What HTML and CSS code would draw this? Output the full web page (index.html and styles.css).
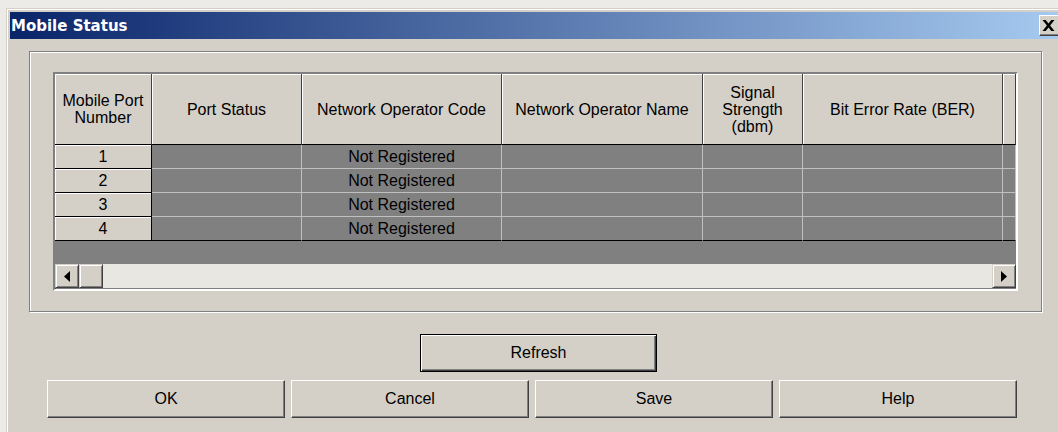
FILE: index.html
```html
<!DOCTYPE html>
<html lang="en">
<head>
<meta charset="utf-8">
<title>Mobile Status</title>
<link rel="stylesheet" href="styles.css">
</head>
<body>
<div class="window">
  <div class="titlebar">
    <span class="title">Mobile Status</span>
    <button class="close" aria-label="Close">
      <svg width="13" height="11" viewBox="0 0 13 11"><path d="M0.5 0h3.2l2.8 3.6L9.3 0h3.2L8.1 5.5 12.5 11H9.3L6.5 7.4 3.7 11H0.5l4.4-5.5z" fill="#000"/></svg>
    </button>
  </div>
  <div class="body">
    <div class="group">
      <div class="grid">
        <table class="table">
          <colgroup>
            <col class="c-port"><col class="c-status"><col class="c-code"><col class="c-name"><col class="c-signal"><col class="c-ber"><col class="c-more">
          </colgroup>
          <thead>
            <tr>
              <th>Mobile Port<br>Number</th>
              <th>Port Status</th>
              <th>Network Operator Code</th>
              <th>Network Operator Name</th>
              <th>Signal<br>Strength<br>(dbm)</th>
              <th>Bit Error Rate (BER)</th>
              <th></th>
            </tr>
          </thead>
          <tbody>
            <tr><td class="rowhead">1</td><td></td><td>Not Registered</td><td></td><td></td><td></td><td></td></tr>
            <tr><td class="rowhead">2</td><td></td><td>Not Registered</td><td></td><td></td><td></td><td></td></tr>
            <tr><td class="rowhead">3</td><td></td><td>Not Registered</td><td></td><td></td><td></td><td></td></tr>
            <tr class="last"><td class="rowhead">4</td><td></td><td>Not Registered</td><td></td><td></td><td></td><td></td></tr>
          </tbody>
        </table>
        <div class="empty"></div>
        <div class="hscroll">
          <div class="sbtn">
            <svg width="6" height="11" viewBox="0 0 6 11"><path d="M6 0v11L0 5.5z" fill="#000"/></svg>
          </div>
          <div class="thumb"></div>
          <div class="track"></div>
          <div class="sbtn">
            <svg width="6" height="11" viewBox="0 0 6 11"><path d="M0 0v11l6-5.5z" fill="#000"/></svg>
          </div>
        </div>
      </div>
    </div>
    <div class="refresh-row">
      <button class="btn default">Refresh</button>
    </div>
    <div class="actions">
      <button class="btn">OK</button>
      <button class="btn">Cancel</button>
      <button class="btn">Save</button>
      <button class="btn">Help</button>
    </div>
  </div>
</div>
</body>
</html>
```

FILE: styles.css
```css
html, body {
  margin: 0;
  padding: 0;
}

body {
  width: 1058px;
  height: 432px;
  overflow: hidden;
  background: #ecebe7;
  font-family: "Liberation Sans", Arial, sans-serif;
  font-size: 16px;
  color: #000;
}

/* dialog frame */
.window {
  box-sizing: border-box;
  margin: 8px 0 0 6px;
  width: 1061px;
  height: 440px;
  background: #d4d0c8;
  border: 1px solid #d4d0c8;
  padding: 3px;
  box-shadow: inset 1px 1px 0 #fff;
}

.titlebar {
  display: flex;
  align-items: center;
  justify-content: space-between;
  height: 27px;
  background: linear-gradient(to right, #0a246a, #a6caf0);
}

.title {
  padding-left: 1px;
  font-family: "DejaVu Sans", Tahoma, sans-serif;
  font-weight: bold;
  font-size: 15px;
  color: #fff;
}

.close {
  box-sizing: border-box;
  display: flex;
  align-items: center;
  justify-content: flex-start;
  width: 22px;
  height: 21px;
  margin-right: 2px;
  padding: 0 0 0 2px;
  background: #d4d0c8;
  border: 1px solid;
  border-color: #fff #404040 #404040 #fff;
  box-shadow: inset -1px -1px 0 #808080;
}

.body {
  padding: 12px 0 0 19px;
}

/* etched group frame */
.group {
  box-sizing: border-box;
  width: 1013px;
  height: 261px;
  border: 1px solid #808080;
  box-shadow: inset 1px 1px 0 #fff, 1px 1px 0 #fff;
  padding: 20px 0 0 23px;
}

/* sunken grid control */
.grid {
  box-sizing: border-box;
  width: 965px;
  height: 219px;
  border: 2px solid;
  border-color: #808080 #fff #fff #808080;
  box-shadow: inset 1px 1px 0 #404040;
  background: #808080;
  overflow: hidden;
}

.table {
  table-layout: fixed;
  border-collapse: separate;
  border-spacing: 0;
  width: 961px;
}

.c-port { width: 97px; }
.c-status { width: 150px; }
.c-code { width: 200px; }
.c-name { width: 201px; }
.c-signal { width: 100px; }
.c-ber { width: 200px; }
.c-more { width: 13px; }

.table th {
  box-sizing: border-box;
  height: 71px;
  padding: 0;
  background: #d4d0c8;
  font-weight: normal;
  line-height: 17px;
  text-align: center;
  vertical-align: middle;
  border-right: 1px solid #404040;
  border-bottom: 1px solid #000;
  box-shadow: inset 1px 1px 0 #fff;
}

.table td {
  box-sizing: border-box;
  height: 24px;
  padding: 0;
  line-height: 22px;
  text-align: center;
  background: #808080;
  border-right: 1px solid #c0c0c0;
  border-bottom: 1px solid #c0c0c0;
}

.table td.rowhead {
  background: #d4d0c8;
  border-right: 1px solid #000;
  border-bottom: 1px solid #000;
  box-shadow: inset 1px 1px 0 #fff;
}

.table tr.last td {
  border-bottom: 1px solid #000;
}

.empty {
  height: 23px;
  background: #808080;
}

/* horizontal scroll bar */
.hscroll {
  display: flex;
  height: 24px;
}

.sbtn,
.thumb {
  box-sizing: border-box;
  width: 24px;
  height: 24px;
  background: #d4d0c8;
  border: 1px solid;
  border-color: #d4d0c8 #404040 #404040 #d4d0c8;
  box-shadow: inset 1px 1px 0 #fff, inset -1px -1px 0 #808080;
  display: flex;
  align-items: center;
  justify-content: center;
}

.track {
  flex: 1;
  background: #e9e7e2;
}

/* push buttons */
.btn {
  box-sizing: border-box;
  height: 38px;
  padding: 0;
  background: #d4d0c8;
  font-family: "Liberation Sans", Arial, sans-serif;
  font-size: 16px;
  color: #000;
  border: 1px solid;
  border-color: #fff #404040 #404040 #fff;
  box-shadow: inset -1px -1px 0 #808080;
}

.btn.default {
  width: 237px;
  border: 1px solid #000;
  box-shadow: inset 1px 1px 0 #fff, inset -1px -1px 0 #404040, inset -2px -2px 0 #808080;
}

.refresh-row {
  padding: 22px 0 0 391px;
}

.actions {
  display: flex;
  gap: 6px;
  padding: 8px 0 0 18px;
}

.actions .btn {
  width: 238px;
}
```
